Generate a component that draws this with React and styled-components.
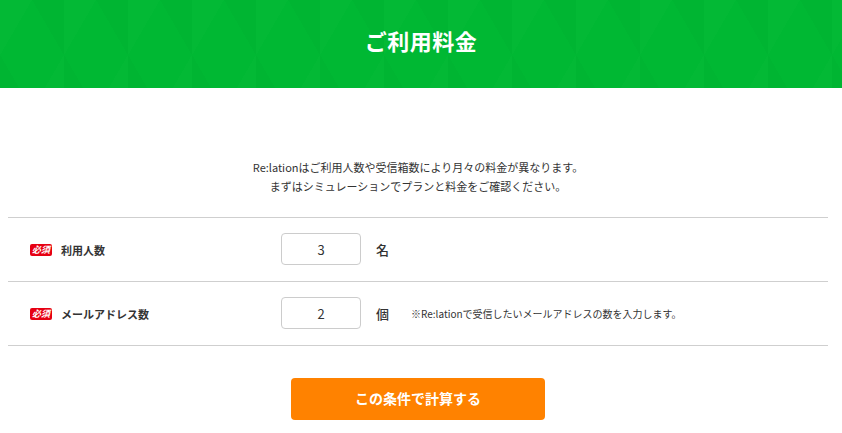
import React, { useState } from "react";
import styled, { createGlobalStyle } from "styled-components";

const GlobalStyle = createGlobalStyle`
  body {
    margin: 0;
    background: #fff;
    font-family: "Noto Sans CJK JP", "Noto Sans", sans-serif;
    color: #333;
  }
`;

const Header = styled.header`
  height: 88px;
  display: flex;
  align-items: center;
  justify-content: center;
  background-color: #00b833;
  background-image: linear-gradient(
      60deg,
      rgba(0, 0, 0, 0.015) 25%,
      transparent 25%,
      transparent 75%,
      rgba(0, 0, 0, 0.015) 75%
    ),
    linear-gradient(
      -60deg,
      rgba(255, 255, 255, 0.012) 25%,
      transparent 25%,
      transparent 75%,
      rgba(255, 255, 255, 0.012) 75%
    );
  background-size: 64px 110px;
`;

const Title = styled.h1`
  margin: 0 0 8px;
  color: #fff;
  font-size: 22px;
  font-weight: 700;
  letter-spacing: 0.5px;
`;

const Main = styled.main`
  margin: 0 14px 0 8px;
  padding-top: 70px;
`;

const Intro = styled.p`
  margin: 0 0 21px;
  text-align: center;
  font-size: 11px;
  line-height: 19px;
  color: #333;
`;

const Table = styled.div`
  border-top: 1px solid #cfcfcf;
`;

const Row = styled.div`
  display: grid;
  grid-template-columns: 251px 80px auto 1fr;
  align-items: center;
  height: 63px;
  padding-left: 22px;
  border-bottom: 1px solid #cfcfcf;
`;

const Label = styled.div`
  display: flex;
  align-items: center;
  gap: 9px;
  font-size: 11px;
  font-weight: 700;
  color: #333;
`;

const Badge = styled.span`
  display: inline-flex;
  align-items: center;
  justify-content: center;
  width: 22px;
  height: 12px;
  border-radius: 2px;
  background: #e60012;
  color: #fff;
  font-size: 9px;
  font-weight: 700;
  line-height: 1;
  font-style: italic;
`;

const NumberInput = styled.input`
  box-sizing: border-box;
  width: 80px;
  height: 32px;
  margin-top: -1px;
  border: 1px solid #ccc;
  border-radius: 4px;
  text-align: center;
  font-family: inherit;
  font-size: 13px;
  color: #333;
  outline: none;
`;

const Unit = styled.span`
  margin-left: 15px;
  font-size: 13px;
  font-weight: 500;
  color: #333;
`;

const Note = styled.span`
  margin-left: 22px;
  font-size: 10px;
  color: #333;
`;

const ButtonWrap = styled.div`
  display: flex;
  justify-content: center;
  padding-top: 32px;
`;

const SubmitButton = styled.button`
  width: 254px;
  height: 42px;
  border: none;
  border-radius: 4px;
  background: #ff8200;
  color: #fff;
  font-family: inherit;
  font-size: 14px;
  font-weight: 700;
  padding: 0 0 3px;
  cursor: pointer;
`;

export default function App() {
  const [users, setUsers] = useState("3");
  const [addresses, setAddresses] = useState("2");

  return (
    <>
      <GlobalStyle />
      <Header>
        <Title>ご利用料金</Title>
      </Header>
      <Main>
        <Intro>
          Re:lationはご利用人数や受信箱数により月々の料金が異なります。
          <br />
          まずはシミュレーションでプランと料金をご確認ください。
        </Intro>
        <Table>
          <Row>
            <Label>
              <Badge>必須</Badge>
              利用人数
            </Label>
            <NumberInput value={users} onChange={(e) => setUsers(e.target.value)} />
            <Unit>名</Unit>
          </Row>
          <Row>
            <Label>
              <Badge>必須</Badge>
              メールアドレス数
            </Label>
            <NumberInput
              value={addresses}
              onChange={(e) => setAddresses(e.target.value)}
            />
            <Unit>個</Unit>
            <Note>※Re:lationで受信したいメールアドレスの数を入力します。</Note>
          </Row>
        </Table>
        <ButtonWrap>
          <SubmitButton type="button">この条件で計算する</SubmitButton>
        </ButtonWrap>
      </Main>
    </>
  );
}
